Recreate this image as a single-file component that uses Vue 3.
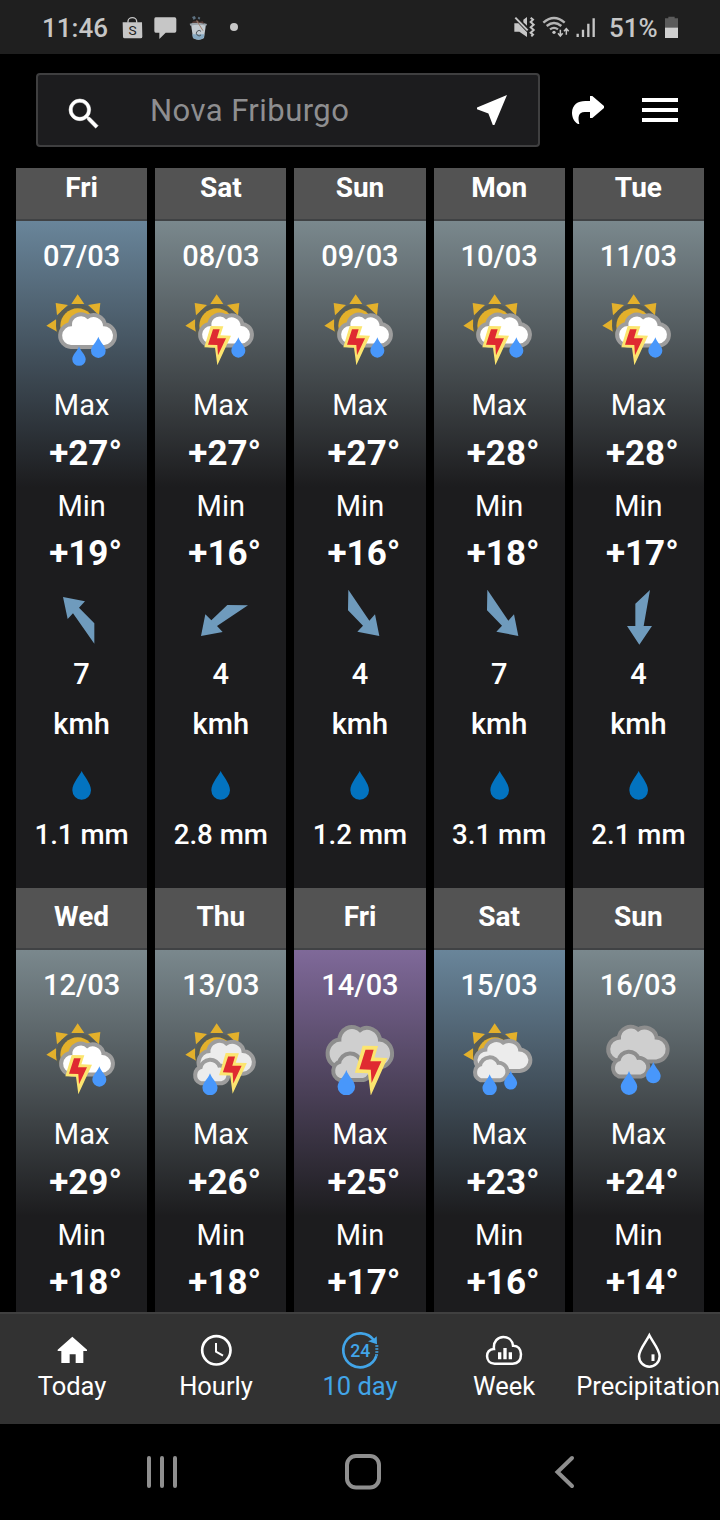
<template>
  <div class="screen">
    <header class="status">
      <div class="status-left">
        <span class="clock">11:46</span>
        <svg class="bag" viewBox="366 45 66 75" width="22" height="25">
          <path d="M384 68V64a13 11 0 0 1 26 0V68" fill="none" stroke="#c6c6c6" stroke-width="4" />
          <path d="M368 67H426L427 110Q427 115 422 115H374Q369 115 369 110Z" fill="#c6c6c6" />
          <text x="397.500" y="106" font-size="41" font-weight="400" font-family="Roboto, sans-serif" text-anchor="middle" fill="#222">S</text>
        </svg>
        <svg class="chat" viewBox="462 45 68 75" width="22.67" height="25">
          <path d="M467 52H524Q529 52 529 57V93Q529 98 524 98H497L478 117V98H467Q463 98 463 93V57Q463 52 467 52Z" fill="#c6c6c6" />
        </svg>
        <svg class="cup" viewBox="567 45 57 75" width="19" height="25">
          <path d="M573 72H618L612 114Q596 124 579 114Z" fill="#c3cbd1" />
          <path d="M577 103H613L611 114Q596 124 579 114Z" fill="#86a9c2" />
          <path d="M569 71Q595 64 621 72L619 77Q595 72 571 77Z" fill="#9aa3aa" />
          <path d="M576 69Q577 62 586 64L592 60L598 66L608 64L613 71Q594 66 576 69Z" fill="#593f3a" />
          <path d="M590 62L609 92" stroke="#a0826f" stroke-width="3" />
          <path d="M576 51l8-3 4 7-7 5zM596 50l5 3-3 6-5-4z" fill="#5d7181" />
          <path d="M603 94a8 8 0 1 0 0 11" fill="none" stroke="#4b5257" stroke-width="3" />
        </svg>
        <i class="dot"></i>
      </div>
      <div class="status-right">
        <svg viewBox="456 45 69 75" width="23" height="25">
          <path d="M460 70H472L498 97V111L475 95H460ZM487 59L498 51V77L487 67Z" fill="#c6c6c6" />
          <path d="M463 53L500 91" stroke="#c6c6c6" stroke-width="6" />
          <path d="M509 53l7 6-7 7 9 8-9 8 9 8-9 8 7 6-5 5" fill="none" stroke="#c6c6c6" stroke-width="6" />
        </svg>
        <svg class="wifi" viewBox="543 45 84 75" width="28" height="25">
          <g fill="none" stroke="#b5b5b5" stroke-width="7">
            <path d="M547 68Q579 40 611 68" />
            <path d="M557 78Q579 60 601 78" />
            <path d="M567 88Q579 79 591 88" />
          </g>
          <circle cx="579" cy="97" r="5" fill="#c6c6c6" />
          <path d="M598 89V108M591 100l7 8 7-8M616 104V86M609 94l7-8 7 8" fill="none" stroke="#c6c6c6" stroke-width="4.500" />
        </svg>
        <svg class="signal" viewBox="645 45 60 75" width="20" height="25">
          <path d="M650 101V111M666 89V111M682 71V111M698 55V111" stroke="#c6c6c6" stroke-width="7" />
        </svg>
        <span class="percent">51%</span>
        <svg class="battery" viewBox="912 45 45 75" width="15" height="25">
          <path d="M925 50H944V55H954V84H915V55H925Z" fill="#5b5b5b" />
          <path d="M915 83H954V114H915Z" fill="#d0d0d0" />
        </svg>
      </div>
    </header>

    <div class="topbar">
      <div class="search">
        <svg class="lens" viewBox="0 0 24 24" width="40" height="40">
          <path fill="#fff" stroke="#fff" stroke-width=".3" d="M15.500 14h-.79l-.28-.27A6.470 6.470 0 0 0 16 9.500 6.500 6.500 0 1 0 9.500 16c1.610 0 3.090-.59 4.230-1.570l.27.28v.79l5 4.990L20.490 19l-4.990-5zm-6 0C7.010 14 5 11.990 5 9.500S7.010 5 9.500 5 14 7.010 14 9.500 11.990 14 9.500 14z" />
        </svg>
        <span class="place">Nova Friburgo</span>
        <svg class="locate" viewBox="0 0 24 24" width="40" height="40">
          <path fill="#fff" d="M21 3L3 10.530v.98l6.840 2.650L12.480 21h.98L21 3z" />
        </svg>
      </div>
      <svg class="share" viewBox="633 285 102 90" width="34" height="30">
        <path fill="#fff" d="M690 288H697L732 318V324L697 354H690V336H674C655 336 653 351 658 372H654C641 364 636 350 636 338C637 314 653 303 676 303H690Z" />
      </svg>
      <div class="burger"><i></i><i></i><i></i></div>
    </div>

    <main class="forecast">
      <div class="days">
        <section v-for="day in days" :key="day.date" class="day">
          <div class="name">{{ day.name }}</div>
          <div class="body" :class="day.sky">
            <div class="date">{{ day.date }}</div>
            <svg class="weather" viewBox="0 0 216 216" width="72" height="72">
              <g v-if="icons[day.icon].sun">
                <path fill="#e3b02b" d="M95 1L115 30H76ZM1 95L30 76L35 114ZM29 27L66 33L33 64ZM163 27L159 64L126 33Z" />
                <circle cx="95" cy="95" r="65" fill="#595d54" />
                <circle cx="95" cy="95" r="52" fill="#e3b02b" />
              </g>
              <path
                v-for="(c, i) in icons[day.icon].clouds"
                :key="'c' + i"
                class="cloud"
                :class="c.tone"
                :d="shapes[c.shape]"
                :transform="c.at"
              />
              <path
                v-for="(d, i) in icons[day.icon].drops"
                :key="'d' + i"
                fill="#4897fb"
                d="M0 0C4 14 21 27 21 40A21 21 0 0 1 -21 40C-21 27 -4 14 0 0Z"
                :transform="d"
              />
              <g v-if="icons[day.icon].bolt" :transform="icons[day.icon].bolt">
                <path fill="#fce56f" d="M77 96L115 97L106 124L138 125L97 214L90 161L58 160Z" />
                <path fill="#df2a31" d="M84 106H104L96 133H123L99 184L97 153L69 152Z" />
              </g>
            </svg>
            <div class="label max">Max</div>
            <div class="temp">{{ day.max }}</div>
            <div class="label min">Min</div>
            <div class="temp low">{{ day.min }}</div>
            <template v-if="day.wind">
              <svg class="wind" viewBox="0 0 216 180" width="72" height="60">
                <polygon :points="arrows[day.dir]" fill="#6f9bbd" />
              </svg>
              <div class="speed">{{ day.wind }}</div>
              <div class="unit">kmh</div>
              <svg class="rain" viewBox="0 0 58 86" width="19.33" height="28.67">
                <path fill="#0373c0" d="M29 0C34 13 57 36 57 58A28 28 0 0 1 1 58C1 36 24 13 29 0Z" />
              </svg>
              <div class="amount">{{ day.rain }}</div>
            </template>
          </div>
        </section>
      </div>
    </main>

    <nav class="tabs">
      <div class="tab">
        <svg viewBox="0 0 120 120" width="40" height="40">
          <path fill="#fff" d="M61 17L105 56V60H94V96H71V70H53V96H28V60H17V56Z" />
        </svg>
        <span>Today</span>
      </div>
      <div class="tab">
        <svg viewBox="0 0 120 120" width="40" height="40" fill="none" stroke="#fff">
          <circle cx="61" cy="58" r="42.500" stroke-width="8" />
          <path d="M60 36V62L81 74" stroke-width="6" />
        </svg>
        <span>Hourly</span>
      </div>
      <div class="tab active">
        <svg viewBox="0 0 120 120" width="40" height="40">
          <path d="M109 75A51 51 0 1 1 102 28" fill="none" stroke="#42a5e8" stroke-width="8" />
          <path d="M84 31L111 40L110 16L101 24Z" fill="#42a5e8" />
          <path d="M106 45H115M106 54H115M106 63H115M105 72H114" stroke="#42a5e8" stroke-width="5" />
          <text x="61" y="79" font-size="53" font-weight="500" font-family="Roboto, sans-serif" text-anchor="middle" fill="#42a5e8">24</text>
        </svg>
        <span>10 day</span>
      </div>
      <div class="tab">
        <svg viewBox="0 0 120 120" width="40" height="40">
          <path fill="none" stroke="#fff" stroke-width="7.500" d="M32 98C2 98 2 53 30 54C27 31 42 18 58 18C74 18 85 28 87 44C102 43 111 55 111 70C111 90 101 98 86 98Z" />
          <path d="M47 64V85M63 51V85M79 64V85" stroke="#fff" stroke-width="10" />
        </svg>
        <span>Week</span>
      </div>
      <div class="tab">
        <svg viewBox="0 0 120 120" width="40" height="40">
          <path fill="none" stroke="#fff" stroke-width="7.500" d="M64 13C56 30 33 56 33 76A31 31 0 0 0 95 76C95 56 72 30 64 13Z" />
          <path d="M75 70V90" stroke="#fff" stroke-width="9" />
        </svg>
        <span>Precipitation</span>
      </div>
    </nav>

    <footer class="system">
      <svg viewBox="0 0 36 36" width="36" height="36">
        <path d="M5 4V32M18 4V32M31 4V32" stroke="#8f8f8f" stroke-width="4" stroke-linecap="round" />
      </svg>
      <svg viewBox="0 0 36 36" width="36" height="36">
        <rect x="2" y="2" width="32" height="31.500" rx="9" fill="none" stroke="#8f8f8f" stroke-width="4" />
      </svg>
      <svg viewBox="0 0 36 36" width="36" height="36">
        <path d="M26 4L11.500 18L26 32" fill="none" stroke="#8f8f8f" stroke-width="4" stroke-linecap="round" />
      </svg>
    </footer>
  </div>
</template>

<script setup>
const shapes = {
  big: 'M28 89A28 28 0 0 1 31 33A27 27 0 0 1 78 12A28 28 0 0 1 124 33A28 28 0 0 1 128 89Z',
  small: 'M20 60A20 20 0 0 1 23 22A24 24 0 0 1 70 19A20.600 20.600 0 0 1 80 60Z',
};

const icons = {
  rain: {
    sun: true,
    clouds: [{ shape: 'big', tone: 'white', at: 'translate(47 64)' }],
    drops: ['translate(99 157) scale(.96)', 'translate(157 128) scale(1.05)'],
  },
  storm: {
    sun: true,
    clouds: [{ shape: 'big', tone: 'white', at: 'translate(50 65) scale(.94)' }],
    drops: ['translate(160 130)'],
    bolt: 'translate(0 0)',
  },
  cloudyStorm: {
    sun: true,
    clouds: [
      { shape: 'big', tone: 'light', at: 'translate(45 57) scale(1.010 1)' },
      { shape: 'small', tone: 'light', at: 'translate(29 115)' },
    ],
    drops: ['translate(75 151) scale(1.080)'],
    bolt: 'translate(42 -10) scale(1.040)',
  },
  heavyStorm: {
    sun: false,
    clouds: [
      { shape: 'big', tone: 'dark', at: 'translate(15 14) scale(1.190 1.270)' },
      { shape: 'small', tone: 'dark', at: 'translate(25 96) scale(1.150)' },
    ],
    drops: ['translate(67 141) scale(1.250)'],
    bolt: 'translate(22 -54) scale(1.220 1.270)',
  },
  cloudyRain: {
    sun: true,
    clouds: [
      { shape: 'big', tone: 'light', at: 'translate(42 55) scale(1 .93)' },
      { shape: 'small', tone: 'light', at: 'translate(35 108) scale(.96)' },
    ],
    drops: ['translate(80 154) scale(1.030)', 'translate(143 143) scale(.93)'],
  },
  heavyRain: {
    sun: false,
    clouds: [
      { shape: 'big', tone: 'dark', at: 'translate(23 14) scale(1.090 1.070)' },
      { shape: 'small', tone: 'dark', at: 'translate(31 91) scale(1.060)' },
    ],
    drops: ['translate(81 144) scale(1.180)', 'translate(154 117) scale(1.050)'],
  },
};

const arrows = {
  nw: '51,27 117,40 99,59 145,106 145,167 81,76 65,93',
  sw: '48,144 61,79 79,97 127,51 189,52 96,114 113,132',
  se: '73,5 136,98 153,79 166,144 100,131 117,113 72,67',
  s: '144,6 125,114 150,114 112,170 75,114 100,114 100,47',
};

const days = [
  { name: 'Fri', date: '07/03', icon: 'rain', sky: 'blue', max: '+27°', min: '+19°', dir: 'nw', wind: 7, rain: '1.1 mm' },
  { name: 'Sat', date: '08/03', icon: 'storm', sky: 'gray', max: '+27°', min: '+16°', dir: 'sw', wind: 4, rain: '2.8 mm' },
  { name: 'Sun', date: '09/03', icon: 'storm', sky: 'gray', max: '+27°', min: '+16°', dir: 'se', wind: 4, rain: '1.2 mm' },
  { name: 'Mon', date: '10/03', icon: 'storm', sky: 'gray', max: '+28°', min: '+18°', dir: 'se', wind: 7, rain: '3.1 mm' },
  { name: 'Tue', date: '11/03', icon: 'storm', sky: 'gray', max: '+28°', min: '+17°', dir: 's', wind: 4, rain: '2.1 mm' },
  { name: 'Wed', date: '12/03', icon: 'storm', sky: 'gray', max: '+29°', min: '+18°' },
  { name: 'Thu', date: '13/03', icon: 'cloudyStorm', sky: 'gray', max: '+26°', min: '+18°' },
  { name: 'Fri', date: '14/03', icon: 'heavyStorm', sky: 'purple', max: '+25°', min: '+17°' },
  { name: 'Sat', date: '15/03', icon: 'cloudyRain', sky: 'blue', max: '+23°', min: '+16°' },
  { name: 'Sun', date: '16/03', icon: 'heavyRain', sky: 'gray', max: '+24°', min: '+14°' },
];
</script>

<style>
body {
  margin: 0;
  background: #000;
}
</style>

<style scoped>
.screen {
  display: flex;
  flex-direction: column;
  width: 720px;
  height: 1520px;
  overflow: hidden;
  background: #000;
  color: #fff;
  font-family: Roboto, "Liberation Sans", sans-serif;
}

svg {
  display: block;
  flex: none;
}

.status {
  display: flex;
  justify-content: space-between;
  box-sizing: border-box;
  height: 54px;
  padding: 0 41px 0 42px;
  background: #1f1f1f;
  color: #c6c6c6;
  font-size: 26px;
  font-weight: 500;
}

.status-left,
.status-right {
  display: flex;
  align-items: center;
}

.clock {
  width: 80px;
  padding-top: 2px;
}

.chat {
  margin-left: 10px;
}

.cup {
  margin-left: 12px;
}

.dot {
  width: 8px;
  height: 8px;
  margin-left: 22px;
  border-radius: 50%;
  background: #c6c6c6;
}

.wifi {
  margin-left: 6px;
}

.signal {
  margin-left: 6px;
}

.percent {
  width: 55px;
  margin-left: 13px;
  padding-top: 2px;
}

.topbar {
  display: flex;
  box-sizing: border-box;
  height: 114px;
  padding: 19px 42px 0 36px;
}

.search {
  display: flex;
  box-sizing: border-box;
  width: 504px;
  height: 74px;
  border: 2px solid #3f3f40;
  border-radius: 4px;
  background: #1c1c1e;
}

.lens {
  margin: 19px 0 0 26px;
}

.place {
  flex: 1;
  margin-left: 46px;
  color: #8e8e90;
  font-size: 31px;
  line-height: 72px;
  letter-spacing: 0.450px;
}

.locate {
  margin: 15px 26px 0 0;
}

.share {
  margin: 22px 0 0 31px;
}

.burger {
  display: flex;
  flex-direction: column;
  gap: 6px;
  width: 36px;
  margin: 25px 0 0 auto;
}

.burger i {
  height: 4px;
  background: #fff;
}

/* the list is scrolled a few pixels down */
.forecast {
  height: 1144px;
  padding: 0 16px;
  overflow: hidden;
}

.days {
  display: grid;
  grid-template-columns: repeat(5, 1fr);
  grid-auto-rows: 729.480px;
  column-gap: 8px;
  margin-top: -9px;
}

.day {
  display: flex;
  flex-direction: column;
  text-align: center;
}

.name {
  box-sizing: border-box;
  height: 62px;
  border-bottom: 2px solid #404244;
  background: #535353;
  font-size: 28px;
  font-weight: 700;
  line-height: 58.800px;
}

.body {
  display: flex;
  flex: 1;
  flex-direction: column;
  align-items: center;
  background: #1c1c1e;
}

.body.gray {
  background: linear-gradient(#7a888d, #1c1c1e 266px);
}

.body.blue {
  background: linear-gradient(#69859a, #1c1c1e 266px);
}

.body.purple {
  background: linear-gradient(#7f6999, #1c1c1e 266px);
}

.date {
  height: 69px;
  font-size: 29px;
  font-weight: 500;
  line-height: 71px;
}

.weather {
  margin-top: 4px;
}

.cloud {
  paint-order: stroke;
  stroke: #9d9d9d;
  stroke-width: 8px;
  stroke-linejoin: round;
  vector-effect: non-scaling-stroke;
}

.cloud.white {
  fill: #fff;
}

.cloud.light {
  fill: #ececec;
}

.cloud.dark {
  fill: #cfcfcf;
  stroke: #8d8d8d;
}

.label {
  font-size: 29px;
}

.max {
  height: 50px;
  margin-top: 14px;
  line-height: 51px;
}

.min {
  height: 59px;
  line-height: 59px;
}

.temp {
  height: 47px;
  padding-left: 8px;
  font-size: 35px;
  font-weight: 700;
  line-height: 47px;
}

.temp.low {
  height: 34px;
  line-height: 35px;
}

.wind {
  margin-top: 18px;
}

.speed {
  height: 52px;
  font-size: 29px;
  font-weight: 500;
  line-height: 52px;
}

.unit {
  height: 48px;
  font-size: 29px;
  font-weight: 500;
  line-height: 48px;
}

.rain {
  margin-top: 23px;
}

.amount {
  height: 70px;
  font-size: 27.700px;
  font-weight: 500;
  line-height: 69px;
}

.tabs {
  display: grid;
  grid-template-columns: repeat(5, 144px);
  box-sizing: border-box;
  height: 112px;
  border-top: 2px solid #404040;
  background: #323232;
}

.tab {
  display: flex;
  flex-direction: column;
  align-items: center;
  padding-top: 17px;
  font-size: 25.500px;
  line-height: 31px;
  white-space: nowrap;
}

.tab.active {
  color: #42a5e8;
}

.system {
  display: flex;
  align-items: flex-start;
  gap: 165px;
  box-sizing: border-box;
  height: 96px;
  padding: 30px 0 0 144px;
}
</style>
